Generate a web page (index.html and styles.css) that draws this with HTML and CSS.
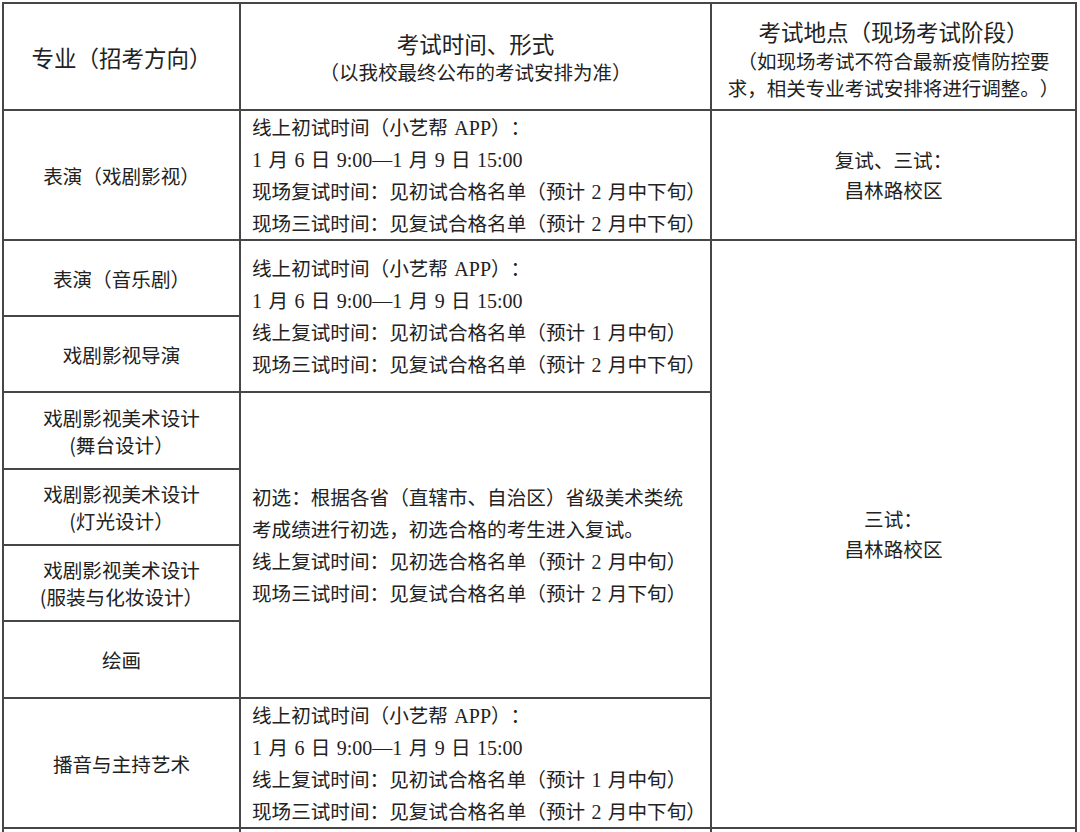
FILE: index.html
```html
<!DOCTYPE html>
<html lang="zh-CN">
<head>
<meta charset="utf-8">
<link rel="stylesheet" href="styles.css">
</head>
<body>
<table class="exam">
  <colgroup>
    <col class="c1"><col class="c2"><col class="c3">
  </colgroup>
  <tr class="h-head">
    <th class="head-big">专业（招考方向）</th>
    <th><div class="head-big">考试时间、形式</div><div class="head-sub">（以我校最终公布的考试安排为准）</div></th>
    <th class="head-place"><div class="head-big tall">考试地点（现场考试阶段）</div><div class="head-sub">（如现场考试不符合最新疫情防控要<br>求，相关专业考试安排将进行调整。）</div></th>
  </tr>
  <tr class="h-tall">
    <td class="major">表演（戏剧影视）</td>
    <td class="info">线上初试时间（小艺帮 <span class="num">APP</span>）：<br><span class="num">1</span> 月 <span class="num">6</span> 日 <span class="num">9:00—1</span> 月 <span class="num">9</span> 日 <span class="num">15:00</span><br>现场复试时间：见初试合格名单（预计 <span class="num">2</span> 月中下旬）<br>现场三试时间：见复试合格名单（预计 <span class="num">2</span> 月中下旬）</td>
    <td class="place">复试、三试：<br>昌林路校区</td>
  </tr>
  <tr class="h-a">
    <td class="major">表演（音乐剧）</td>
    <td class="info" rowspan="2">线上初试时间（小艺帮 <span class="num">APP</span>）：<br><span class="num">1</span> 月 <span class="num">6</span> 日 <span class="num">9:00—1</span> 月 <span class="num">9</span> 日 <span class="num">15:00</span><br>线上复试时间：见初试合格名单（预计 <span class="num">1</span> 月中旬）<br>现场三试时间：见复试合格名单（预计 <span class="num">2</span> 月中下旬）</td>
    <td class="place" rowspan="7">三试：<br>昌林路校区</td>
  </tr>
  <tr class="h-a">
    <td class="major">戏剧影视导演</td>
  </tr>
  <tr class="h-b">
    <td class="major">戏剧影视美术设计<br>(舞台设计）</td>
    <td class="info" rowspan="4">初选：根据各省（直辖市、自治区）省级美术类统<br>考成绩进行初选，初选合格的考生进入复试。<br>线上复试时间：见初选合格名单（预计 <span class="num">2</span> 月中旬）<br>现场三试时间：见复试合格名单（预计 <span class="num">2</span> 月下旬）</td>
  </tr>
  <tr class="h-a">
    <td class="major">戏剧影视美术设计<br>(灯光设计）</td>
  </tr>
  <tr class="h-a">
    <td class="major">戏剧影视美术设计<br>(服装与化妆设计）</td>
  </tr>
  <tr class="h-b">
    <td class="major">绘画</td>
  </tr>
  <tr class="h-tall">
    <td class="major">播音与主持艺术</td>
    <td class="info">线上初试时间（小艺帮 <span class="num">APP</span>）：<br><span class="num">1</span> 月 <span class="num">6</span> 日 <span class="num">9:00—1</span> 月 <span class="num">9</span> 日 <span class="num">15:00</span><br>线上复试时间：见初试合格名单（预计 <span class="num">1</span> 月中旬）<br>现场三试时间：见复试合格名单（预计 <span class="num">2</span> 月中下旬）</td>
  </tr>
  <tr class="h-tail">
    <td></td>
    <td></td>
    <td></td>
  </tr>
</table>
</body>
</html>
```

FILE: styles.css
```css
html, body {
  margin: 0;
  padding: 0;
  background: #ffffff;
}
body {
  font-family: "Noto Sans CJK SC", "Noto Sans", sans-serif;
  color: #222222;
  text-spacing-trim: space-all;
}
.exam {
  border-collapse: collapse;
  table-layout: fixed;
  width: 1073px;
  margin: 2px 0 0 2px;
}
.c1 { width: 237px; }
.c2 { width: 471px; }
.c3 { width: 365px; }
.exam th, .exam td {
  border: 2px solid #464646;
  padding: 0;
  vertical-align: middle;
}
.exam th {
  font-weight: normal;
  text-align: center;
}
.head-big {
  font-size: 22.5px;
  line-height: 30px;
}
.head-big.tall {
  line-height: 31px;
}
.head-sub {
  font-size: 19.5px;
  line-height: 27px;
}
.exam th.head-place {
  padding-top: 4px;
}
.h-head { height: 107px; }
.h-tall { height: 130px; }
.h-a { height: 76px; }
.h-b { height: 77px; }
.h-tail { height: 10px; }
.major {
  text-align: center;
  font-size: 19.6px;
  line-height: 27px;
}
.exam td.info {
  padding-left: 11px;
  padding-right: 4px;
  font-size: 19.6px;
  line-height: 32px;
  word-spacing: 2px;
}
.place {
  text-align: center;
  font-size: 19.6px;
  line-height: 30px;
}
.num {
  font-family: "Liberation Serif", serif;
  font-size: 20px;
  line-height: 16px;
}
```
